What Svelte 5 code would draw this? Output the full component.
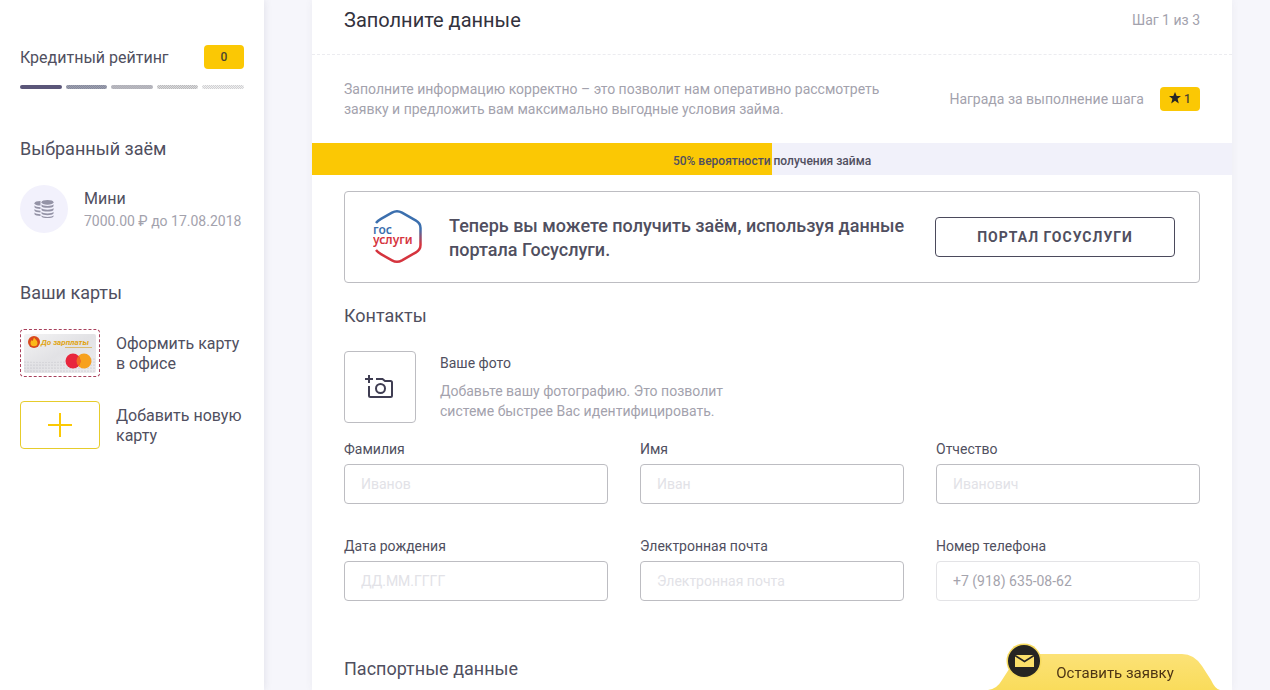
<script lang="ts">
	type Field = { id: string; label: string; type: string; placeholder?: string; value?: string; disabled?: boolean };

	const fields: Field[] = [
		{ id: 'surname', label: 'Фамилия', type: 'text', placeholder: 'Иванов' },
		{ id: 'name', label: 'Имя', type: 'text', placeholder: 'Иван' },
		{ id: 'patronymic', label: 'Отчество', type: 'text', placeholder: 'Иванович' },
		{ id: 'birthday', label: 'Дата рождения', type: 'text', placeholder: 'ДД.ММ.ГГГГ' },
		{ id: 'email', label: 'Электронная почта', type: 'email', placeholder: 'Электронная почта' },
		{ id: 'phone', label: 'Номер телефона', type: 'tel', value: '+7 (918) 635-08-62', disabled: true }
	];

	let chance = $state(50);
</script>

<div class="page">
	<aside class="sidebar">
		<section class="rating">
			<div class="rating-head">
				<span class="rating-title">Кредитный рейтинг</span>
				<span class="badge">0</span>
			</div>
			<div class="levels">
				{#each [1, 2, 3, 4, 5] as level}
					<span class="level level-{level}"></span>
				{/each}
			</div>
		</section>

		<section>
			<h2>Выбранный заём</h2>
			<div class="loan">
				<span class="loan-icon">
					<svg width="20" height="20" viewBox="0 0 20 20" fill="#9493a6" aria-hidden="true">
						<ellipse cx="13.5" cy="3.3" rx="6" ry="2.4" />
						<path d="M7.5 5.3c1 2.3 11 2.3 12 0v1.9c-1 2.2-11 2.2-12 0z" />
						<path d="M7.5 9c1 2.3 11 2.3 12 0v1.9c-1 2.2-11 2.2-12 0z" />
						<path d="M7.5 12.7c1 2.3 11 2.3 12 0v1.9c-1 2.2-11 2.2-12 0z" />
						<path d="M7.5 16.2c1 2.3 11 2.3 12 0v1.2c-1 2.2-11 2.2-12 0z" />
						<path d="M6.5 2c-3.500 0-6 .9-6 2.300s2.500 2.300 6 2.300z" />
						<path d="M.5 6.500c.8 1.200 3 1.600 6 1.700v1.700c-3-.1-5.500-.6-6-1.700z" />
						<path d="M.5 10c.8 1.200 3 1.600 6 1.700v1.700c-3-.1-5.500-.6-6-1.700z" />
						<path d="M.5 13.500c.8 1.200 3 1.600 6 1.700v1.700c-3-.1-5.500-.6-6-1.700z" />
					</svg>
				</span>
				<div>
					<div class="loan-name">Мини</div>
					<div class="loan-terms">7000.00 ₽ до 17.08.2018</div>
				</div>
			</div>
		</section>

		<section>
			<h2>Ваши карты</h2>
			<a class="card-link" href="#office">
				<span class="card card-office">
					<svg width="72" height="39" viewBox="0 0 72 39" aria-hidden="true">
						<defs>
							<linearGradient id="plastic" x1="0" y1="0" x2="1" y2="1">
								<stop offset="0" stop-color="#f3f3f4" />
								<stop offset="0.5" stop-color="#e2e2e5" />
								<stop offset="1" stop-color="#ececee" />
							</linearGradient>
							<pattern id="dots" width="3" height="3" patternUnits="userSpaceOnUse">
								<circle cx="1" cy="1" r="0.6" fill="#b4b4ba" />
							</pattern>
						</defs>
						<rect width="72" height="39" rx="2" fill="url(#plastic)" />
						<path d="M0 27q20 2 42 0t30-4v16H0z" fill="url(#dots)" />
						<circle cx="10" cy="8" r="6" fill="#d9481c" />
						<path d="M10 3.500c1 2 3.500 3 3.500 5.500A3.500 3.200 0 0 1 6.500 9c0-1.500.8-2 1.200-3l1 1z" fill="#fbb91b" />
						<text x="17" y="11" class="card-brand">До зарплаты</text>
						<path d="M41 13.500h27" stroke="#d9a93a" stroke-width="0.7" />
						<circle cx="60" cy="27" r="7.500" fill="#f7a11e" />
						<circle cx="49" cy="27" r="7.500" fill="#e8263d" />
						<path d="M54.500 21.900a7.500 7.500 0 0 1 0 10.200a7.500 7.500 0 0 1 0-10.200" fill="#f26b22" />
					</svg>
				</span>
				<span class="card-name">Оформить карту в офисе</span>
			</a>
			<a class="card-link" href="#new-card">
				<span class="card card-new">
					<svg width="24" height="24" viewBox="0 0 24 24" stroke="#fbc905" stroke-width="2" aria-hidden="true">
						<path d="M12 0v24M0 12h24" />
					</svg>
				</span>
				<span class="card-name">Добавить новую карту</span>
			</a>
		</section>
	</aside>

	<main class="content">
		<header class="head">
			<h1>Заполните данные</h1>
			<span class="muted">Шаг 1 из 3</span>
		</header>

		<div class="intro">
			<p class="muted intro-text">
				Заполните информацию корректно – это позволит нам оперативно рассмотреть заявку и предложить
				вам максимально выгодные условия займа.
			</p>
			<div class="reward">
				<span class="muted">Награда за выполнение шага</span>
				<span class="badge">
					<svg width="12" height="14" viewBox="0 0 12 14" fill="#262626" aria-hidden="true">
						<path d="M6 0l1.700 4H12L8.600 6.800 9.800 11.500 6 8.800 2.200 11.500 3.400 6.800 0 4h4.300z" />
					</svg>
					1
				</span>
			</div>
		</div>

		<div class="chance">
			<div class="chance-fill" style="width: {chance}%"></div>
			<span class="chance-text">{chance}% вероятности получения займа</span>
		</div>

		<form class="form">
			<div class="portal">
				<svg class="portal-logo" width="50" height="54" viewBox="0 0 50 54" fill="none" aria-hidden="true">
					<defs>
						<linearGradient id="gos" x1="0" y1="0" x2="0" y2="1">
							<stop offset="0.35" stop-color="#3b6fae" />
							<stop offset="0.65" stop-color="#d5343e" />
						</linearGradient>
					</defs>
					<path
						d="M3 13Q5 10.500 8 8.800L19 2.700q5-2.700 10 0l14 8q4.500 2.600 4.500 7.300v17q0 4.700-4.500 7.300l-14 8q-5 2.700-10 0L8 44.200q-3-1.700-5-4.200"
						stroke="url(#gos)"
						stroke-width="2.500"
					/>
					<text x="0" y="24" class="logo-text" fill="#3b6fae">гос</text>
					<text x="0" y="34" class="logo-text" fill="#d5343e">услуги</text>
				</svg>
				<p class="portal-text">Теперь вы можете получить заём, используя данные портала Госуслуги.</p>
				<button type="button" class="portal-button">Портал Госуслуги</button>
			</div>

			<h2>Контакты</h2>
			<div class="photo">
				<button type="button" class="photo-button" aria-label="Добавить фото">
					<svg width="30" height="24" viewBox="0 0 30 24" fill="none" stroke="#3f3d52" stroke-width="2" aria-hidden="true">
						<path d="M4 0v8M0 4h8" />
						<path d="M4 11v9.500q0 1.500 1.500 1.500h20q1.500 0 1.500-1.500V7.500Q27 6 25.500 6H20l-2.500-2H11" />
						<circle cx="15.500" cy="13.500" r="4.500" />
					</svg>
				</button>
				<div class="photo-info">
					<div class="photo-title">Ваше фото</div>
					<p class="muted">Добавьте вашу фотографию. Это позволит системе быстрее Вас идентифицировать.</p>
				</div>
			</div>

			<div class="fields">
				{#each fields as field}
					<div class="field">
						<label for={field.id}>{field.label}</label>
						<input
							id={field.id}
							type={field.type}
							placeholder={field.placeholder}
							value={field.value ?? ''}
							disabled={field.disabled}
						/>
					</div>
				{/each}
			</div>

			<h2>Паспортные данные</h2>
		</form>
	</main>
</div>

<button type="button" class="request">
	<svg class="request-shape" width="232" height="36" viewBox="0 0 232 36" aria-hidden="true">
		<defs>
			<linearGradient id="tab" x1="0" y1="0" x2="0" y2="1">
				<stop offset="0" stop-color="#fce277" />
				<stop offset="1" stop-color="#f9dc5b" />
			</linearGradient>
		</defs>
		<path d="M0 36q9-1 14-10l9-14Q30 0 42 0h152q12 0 20 12l9 14q4 9 9 10z" fill="url(#tab)" />
	</svg>
	<svg class="request-icon" width="36" height="36" viewBox="0 0 36 36" aria-hidden="true">
		<circle cx="18" cy="18" r="17.500" fill="#f6da5d" />
		<circle cx="18" cy="18" r="16" fill="#262522" />
		<path d="M9 12h19v12H9z" fill="#fbe06a" />
		<path d="M9 12.500l9.500 6 9.500-6" fill="none" stroke="#262522" stroke-width="1.500" />
	</svg>
	<span class="request-text">Оставить заявку</span>
</button>

<style>
	:global(body) {
		background: #f6f6fb;
		color: #504f60;
		font-family: Roboto, 'Liberation Sans', sans-serif;
		font-size: 14px;
		line-height: 20px;
	}

	h1,
	h2,
	p {
		margin: 0;
		font-weight: 400;
	}
	h1 {
		color: #33323d;
		font-size: 20px;
		line-height: 24px;
	}
	h2 {
		font-size: 18px;
		line-height: 24px;
	}
	button,
	input {
		box-sizing: border-box;
		font-family: inherit;
	}
	.muted {
		color: #a3a2ad;
	}

	.page {
		display: flex;
		min-height: 100vh;
	}

	.sidebar {
		box-sizing: border-box;
		width: 264px;
		flex-shrink: 0;
		padding: 45px 20px 0;
		background: #fff;
		box-shadow: 0 0 8px rgba(60, 60, 90, 0.12);
		font-size: 16px;
	}
	.sidebar section {
		margin-bottom: 48px;
	}
	.rating-head {
		display: flex;
		align-items: center;
		justify-content: space-between;
	}
	.rating-title,
	.card-name {
		padding-top: 2px;
	}
	.badge {
		display: inline-flex;
		align-items: center;
		justify-content: center;
		gap: 3px;
		width: 40px;
		height: 24px;
		border-radius: 4px;
		background: #fbc804;
		color: #4b4530;
		font-size: 12px;
		font-weight: 500;
	}
	.levels {
		display: grid;
		grid-template-columns: repeat(5, 1fr);
		gap: 4px;
		margin-top: 16px;
	}
	.level {
		height: 4px;
		border-radius: 2px;
	}
	.level-1 {
		background: #5b5679;
	}
	.level-2 {
		background: repeating-conic-gradient(#868a9e 0 25%, #9da0ae 0 50%) 0 0 / 2px 2px;
	}
	.level-3 {
		background: repeating-conic-gradient(#afafb8 0 25%, #babac0 0 50%) 0 0 / 2px 2px;
	}
	.level-4 {
		background: repeating-conic-gradient(#b9b9bb 0 25%, #dcdcde 0 50%) 0 0 / 2px 2px;
	}
	.level-5 {
		background: repeating-conic-gradient(#d0d0d2 0 25%, #f0f0f1 0 50%) 0 0 / 2px 2px;
	}

	.loan {
		display: flex;
		align-items: center;
		gap: 16px;
		margin-top: 24px;
	}
	.loan-icon {
		display: flex;
		align-items: center;
		justify-content: center;
		width: 48px;
		height: 48px;
		border-radius: 50%;
		background: #f2f1fc;
	}
	.loan-name {
		line-height: 24px;
	}
	.loan-terms {
		color: #a3a2ad;
		font-size: 14px;
		white-space: nowrap;
	}

	.card-link {
		display: flex;
		align-items: center;
		gap: 16px;
		margin-top: 24px;
		color: inherit;
		text-decoration: none;
	}
	.card {
		display: flex;
		box-sizing: border-box;
		align-items: center;
		justify-content: center;
		flex-shrink: 0;
		width: 80px;
		height: 48px;
		border-radius: 4px;
	}
	.card-office {
		border: 1px dashed #a8405c;
	}
	.card-new {
		border: 1px solid #e6cc2c;
	}
	.card-brand {
		fill: #e0a414;
		font-size: 8px;
		font-style: italic;
		font-weight: 700;
	}

	.content {
		flex: 1;
		min-width: 0;
		margin: 0 38px 0 48px;
		background: #fff;
		box-shadow: 0 0 8px rgba(60, 60, 90, 0.06);
	}
	.head {
		display: flex;
		align-items: center;
		justify-content: space-between;
		padding: 8px 32px 22px;
		border-bottom: 1px dashed #ececf0;
	}
	.intro {
		display: flex;
		align-items: center;
		justify-content: space-between;
		gap: 48px;
		padding: 24px 32px;
	}
	.intro-text {
		max-width: 560px;
	}
	.reward {
		display: flex;
		align-items: center;
		gap: 16px;
		white-space: nowrap;
	}

	.chance {
		display: grid;
		align-items: center;
		height: 32px;
		background: #f1f1fa;
	}
	.chance-fill,
	.chance-text {
		grid-area: 1 / 1;
	}
	.chance-fill {
		height: 32px;
		background: #fbc804;
	}
	.chance-text {
		padding-top: 4px;
		font-size: 12px;
		font-weight: 500;
		text-align: center;
	}

	.form {
		padding: 16px 32px 0;
	}
	.portal {
		display: flex;
		align-items: center;
		gap: 26px;
		margin-bottom: 21px;
		padding: 18px 24px 18px 28px;
		border: 1px solid #bdbdc2;
		border-radius: 4px;
	}
	.portal-logo {
		flex-shrink: 0;
	}
	.logo-text {
		font-family: 'Noto Sans', sans-serif;
		font-size: 12px;
		font-weight: 600;
	}
	.portal-text {
		flex: 1;
		padding-top: 2px;
		font-size: 18px;
		font-weight: 500;
		line-height: 24px;
	}
	.portal-button {
		width: 240px;
		height: 40px;
		border: 1px solid #4b4a5c;
		border-radius: 4px;
		background: #fff;
		color: #504f60;
		font-size: 14px;
		font-weight: 700;
		letter-spacing: 1px;
		text-transform: uppercase;
		cursor: pointer;
	}

	.photo {
		display: flex;
		gap: 24px;
		margin: 23px 0 16px;
	}
	.photo-button {
		display: flex;
		align-items: center;
		justify-content: center;
		width: 72px;
		height: 72px;
		padding: 0;
		border: 1px solid #bdbdc2;
		border-radius: 4px;
		background: #fff;
		cursor: pointer;
	}
	.photo-info {
		max-width: 300px;
		padding-top: 2px;
	}
	.photo-title {
		margin-bottom: 8px;
	}

	.fields {
		display: grid;
		grid-template-columns: repeat(3, 1fr);
		gap: 32px;
		margin-bottom: 56px;
	}
	.field label {
		display: block;
		margin-bottom: 5px;
	}
	.field input {
		width: 100%;
		height: 40px;
		padding: 0 16px;
		border: 1px solid #bdbdc2;
		border-radius: 4px;
		background: #fff;
		color: #504f60;
		font-size: 14px;
	}
	.field input::placeholder {
		color: #e2e2e7;
	}
	.field input:disabled {
		border-color: #e3e3e6;
		color: #a5a4ad;
	}

	.request {
		position: fixed;
		right: 50px;
		bottom: 0;
		width: 232px;
		height: 36px;
		padding: 2px 0 0;
		border: none;
		background: none;
		color: #4d3414;
		font-size: 15px;
		cursor: pointer;
	}
	.request-shape {
		position: absolute;
		inset: 0;
	}
	.request-icon {
		position: absolute;
		top: -11px;
		left: 18px;
	}
	.request-text {
		position: relative;
		padding-left: 22px;
	}
</style>
